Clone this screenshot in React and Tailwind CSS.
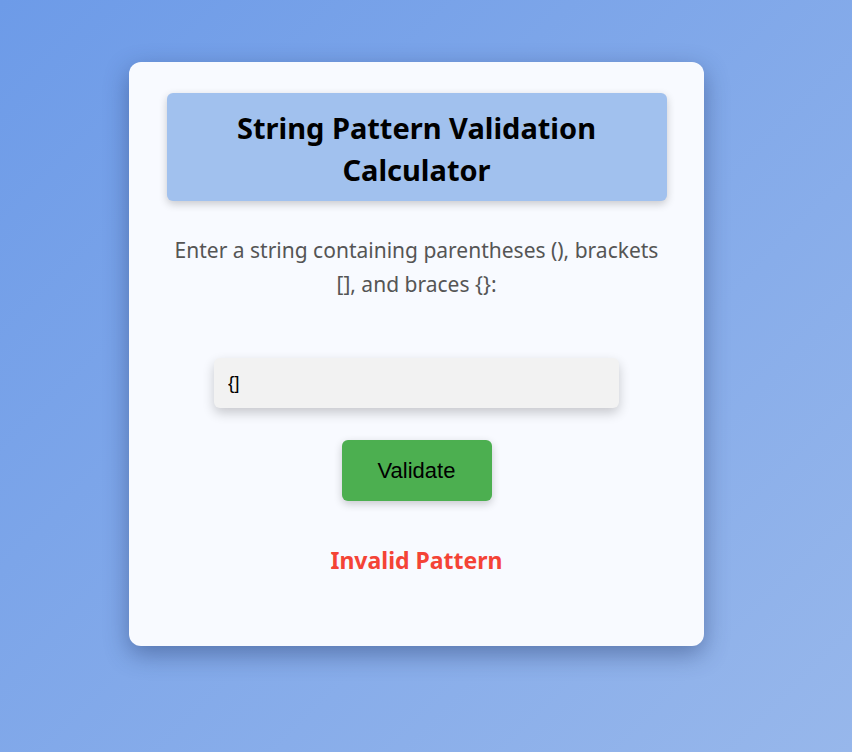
import React, { useState } from 'react'

function isValid(s) {
  const pairs = { ')': '(', ']': '[', '}': '{' }
  const stack = []
  for (const ch of s) {
    if ('([{'.includes(ch)) stack.push(ch)
    else if (pairs[ch]) {
      if (stack.pop() !== pairs[ch]) return false
    }
  }
  return stack.length === 0
}

export default function App() {
  const [value, setValue] = useState('{]')
  const [result, setResult] = useState(false)

  return (
    <div
      className="min-h-[752px] w-full flex justify-center pt-[62px] pr-[19px] bg-[linear-gradient(135deg,#6d9be8,#97b7eb)]"
      style={{ fontFamily: '"Noto Sans", "Open Sans", sans-serif' }}
    >
      <div className="w-[575px] h-[584px] bg-[#f8faff] rounded-xl shadow-[0_8px_24px_rgba(30,50,100,0.45)] flex flex-col items-center pt-[31px]">
        <div className="w-[500px] h-[108px] bg-[#a1c1ee] rounded-md shadow-[0_3px_8px_rgba(0,0,0,0.2)] flex items-center justify-center pt-[4px]">
          <h1 className="text-[29px] leading-[42px] font-bold text-black text-center px-14">
            String Pattern Validation Calculator
          </h1>
        </div>
        <p className="mt-[32px] w-[500px] text-center text-[21px] leading-[34px] text-[#555]">
          Enter a string containing parentheses (), brackets [], and braces {'{}'}:
        </p>
        <input
          value={value}
          onChange={(e) => setValue(e.target.value)}
          className="mt-[57px] w-[405px] h-[50px] bg-[#f2f2f2] rounded-md px-[14px] text-[19px] text-black outline-none shadow-[0_5px_12px_rgba(0,0,0,0.2)]"
          style={{ fontFamily: '"Liberation Sans", Arial, sans-serif' }}
        />
        <button
          onClick={() => setResult(isValid(value))}
          className="mt-[32px] w-[150px] h-[61px] bg-[#4caf50] rounded-md text-[22px] text-black shadow-[0_3px_8px_rgba(0,0,0,0.2)]"
          style={{ fontFamily: '"Liberation Sans", Arial, sans-serif' }}
        >
          Validate
        </button>
        <div className={`mt-[42px] text-[23px] font-bold ${result ? 'text-[#4caf50]' : 'text-[#f44336]'}`}>
          {result ? 'Valid Pattern' : 'Invalid Pattern'}
        </div>
      </div>
    </div>
  )
}
